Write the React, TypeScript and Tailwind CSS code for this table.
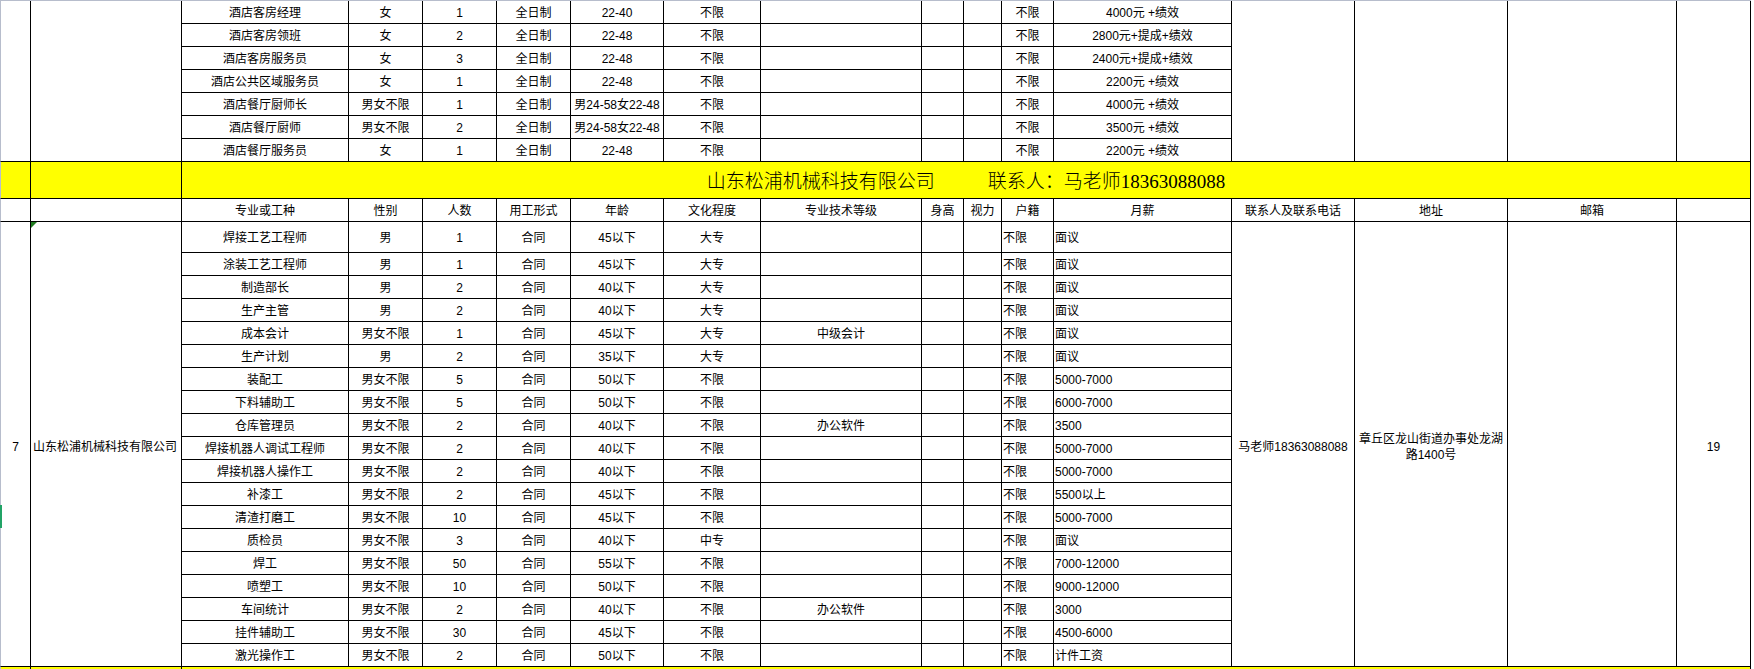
import React from "react";

type CellProps = {
  children?: React.ReactNode;
  className?: string;
  wrap?: boolean;
};

function Cell({ children, className = "", wrap = false }: CellProps) {
  return (
    <div
      className={
        "border-r border-b border-black flex items-center text-[12px] overflow-hidden text-black " +
        (wrap ? "whitespace-normal leading-[16px] " : "whitespace-nowrap leading-none ") +
        className
      }
    >
      {children}
    </div>
  );
}

const topRows: string[][] = [
  ["酒店客房经理", "女", "1", "全日制", "22-40", "不限", "", "", "", "不限", "4000元 +绩效"],
  ["酒店客房领班", "女", "2", "全日制", "22-48", "不限", "", "", "", "不限", "2800元+提成+绩效"],
  ["酒店客房服务员", "女", "3", "全日制", "22-48", "不限", "", "", "", "不限", "2400元+提成+绩效"],
  ["酒店公共区域服务员", "女", "1", "全日制", "22-48", "不限", "", "", "", "不限", "2200元 +绩效"],
  ["酒店餐厅厨师长", "男女不限", "1", "全日制", "男24-58女22-48", "不限", "", "", "", "不限", "4000元 +绩效"],
  ["酒店餐厅厨师", "男女不限", "2", "全日制", "男24-58女22-48", "不限", "", "", "", "不限", "3500元 +绩效"],
  ["酒店餐厅服务员", "女", "1", "全日制", "22-48", "不限", "", "", "", "不限", "2200元 +绩效"],
];

const headers = [
  "专业或工种",
  "性别",
  "人数",
  "用工形式",
  "年龄",
  "文化程度",
  "专业技术等级",
  "身高",
  "视力",
  "户籍",
  "月薪",
  "联系人及联系电话",
  "地址",
  "邮箱",
  "",
];

const dataRows: string[][] = [
  ["焊接工艺工程师", "男", "1", "合同", "45以下", "大专", "", "", "", "不限", "面议"],
  ["涂装工艺工程师", "男", "1", "合同", "45以下", "大专", "", "", "", "不限", "面议"],
  ["制造部长", "男", "2", "合同", "40以下", "大专", "", "", "", "不限", "面议"],
  ["生产主管", "男", "2", "合同", "40以下", "大专", "", "", "", "不限", "面议"],
  ["成本会计", "男女不限", "1", "合同", "45以下", "大专", "中级会计", "", "", "不限", "面议"],
  ["生产计划", "男", "2", "合同", "35以下", "大专", "", "", "", "不限", "面议"],
  ["装配工", "男女不限", "5", "合同", "50以下", "不限", "", "", "", "不限", "5000-7000"],
  ["下料辅助工", "男女不限", "5", "合同", "50以下", "不限", "", "", "", "不限", "6000-7000"],
  ["仓库管理员", "男女不限", "2", "合同", "40以下", "不限", "办公软件", "", "", "不限", "3500"],
  ["焊接机器人调试工程师", "男女不限", "2", "合同", "40以下", "不限", "", "", "", "不限", "5000-7000"],
  ["焊接机器人操作工", "男女不限", "2", "合同", "40以下", "不限", "", "", "", "不限", "5000-7000"],
  ["补漆工", "男女不限", "2", "合同", "45以下", "不限", "", "", "", "不限", "5500以上"],
  ["清渣打磨工", "男女不限", "10", "合同", "45以下", "不限", "", "", "", "不限", "5000-7000"],
  ["质检员", "男女不限", "3", "合同", "40以下", "中专", "", "", "", "不限", "面议"],
  ["焊工", "男女不限", "50", "合同", "55以下", "不限", "", "", "", "不限", "7000-12000"],
  ["喷塑工", "男女不限", "10", "合同", "50以下", "不限", "", "", "", "不限", "9000-12000"],
  ["车间统计", "男女不限", "2", "合同", "40以下", "不限", "办公软件", "", "", "不限", "3000"],
  ["挂件辅助工", "男女不限", "30", "合同", "45以下", "不限", "", "", "", "不限", "4500-6000"],
  ["激光操作工", "男女不限", "2", "合同", "50以下", "不限", "", "", "", "不限", "计件工资"],
];

export default function App() {
  return (
    <div className="w-[1754px] h-[669px] overflow-hidden bg-white [font-family:'Liberation_Sans','Noto_Sans_CJK_SC',sans-serif]">
      <div className="w-[1751px] border-t border-[#b7bdcc] grid grid-cols-[31px_151px_167px_74px_74px_74px_93px_97px_161px_42px_38px_52px_178px_123px_153px_169px_74px] grid-rows-[repeat(7,23px)_37px_23px_31px_repeat(18,23px)_37px]">
        {/* top section */}
        <Cell className="row-span-7 border-l border-l-[#b7bdcc]" />
        <Cell className="row-span-7" />
        {topRows[0].map((v, i) => (
          <Cell key={"t0-" + i} className="justify-center pt-[2px]">
            {v}
          </Cell>
        ))}
        <Cell className="row-span-7" />
        <Cell className="row-span-7" />
        <Cell className="row-span-7" />
        <Cell className="row-span-7" />
        {topRows.slice(1).map((row, r) =>
          row.map((v, i) => (
            <Cell key={"t" + (r + 1) + "-" + i} className="justify-center pt-[2px]">
              {v}
            </Cell>
          ))
        )}

        {/* yellow company row */}
        <Cell className="bg-[#ffff00] border-l border-l-[#b7bdcc]" />
        <Cell className="bg-[#ffff00]" />
        <Cell className="col-span-15 bg-[#ffff00] justify-center pt-[3px] text-[19px] font-light text-[#2a2a10] [font-family:'Liberation_Serif','Noto_Sans_CJK_SC',serif]">
          <span>山东松浦机械科技有限公司</span>
          <span className="ml-[53px]">联系人：马老师18363088088</span>
        </Cell>

        {/* header row */}
        <Cell className="border-l border-l-[#b7bdcc]" />
        <Cell />
        {headers.map((h, i) => (
          <Cell key={"h" + i} className="justify-center pt-[2px]">
            {h}
          </Cell>
        ))}

        {/* data section */}
        <Cell className="row-span-19 justify-center pt-[6px] border-l border-l-[#b7bdcc] relative overflow-visible">
          7
          <div className="absolute left-[-1px] top-[283px] w-[2px] h-[23px] bg-[#21a366]" />
        </Cell>
        <Cell className="row-span-19 justify-start pl-[2px] pt-[6px] relative">
          山东松浦机械科技有限公司
          <svg className="absolute left-0 top-0" width="6" height="6" viewBox="0 0 6 6">
            <polygon points="0,0 6,0 0,6" fill="#1f7a1f" />
          </svg>
        </Cell>
        {dataRows[0].map((v, i) => (
          <Cell
            key={"d0-" + i}
            className={i >= 9 ? "justify-start pl-[1px] pt-[2px]" : "justify-center pt-[2px]"}
          >
            {v}
          </Cell>
        ))}
        <Cell className="row-span-19 justify-center pt-[6px]">马老师18363088088</Cell>
        <Cell wrap className="row-span-19 justify-center pt-[6px] px-[3px]">
          <span className="block text-center whitespace-normal">章丘区龙山街道办事处龙湖路1400号</span>
        </Cell>
        <Cell className="row-span-19" />
        <Cell className="row-span-19 justify-center pt-[6px]">19</Cell>
        {dataRows.slice(1).map((row, r) =>
          row.map((v, i) => (
            <Cell
              key={"d" + (r + 1) + "-" + i}
              className={
                (i >= 9 ? "justify-start pl-[1px] pt-[2px]" : "justify-center pt-[2px]") +
                (i === 2 && v === "50" ? " text-[#1f3b9c]" : "")
              }
            >
              {v}
            </Cell>
          ))
        )}

        {/* next yellow row (partially visible) */}
        <Cell className="bg-[#ffff00] border-l border-l-[#b7bdcc]" />
        <Cell className="bg-[#ffff00]" />
        <Cell className="col-span-15 bg-[#ffff00]" />
      </div>
    </div>
  );
}
